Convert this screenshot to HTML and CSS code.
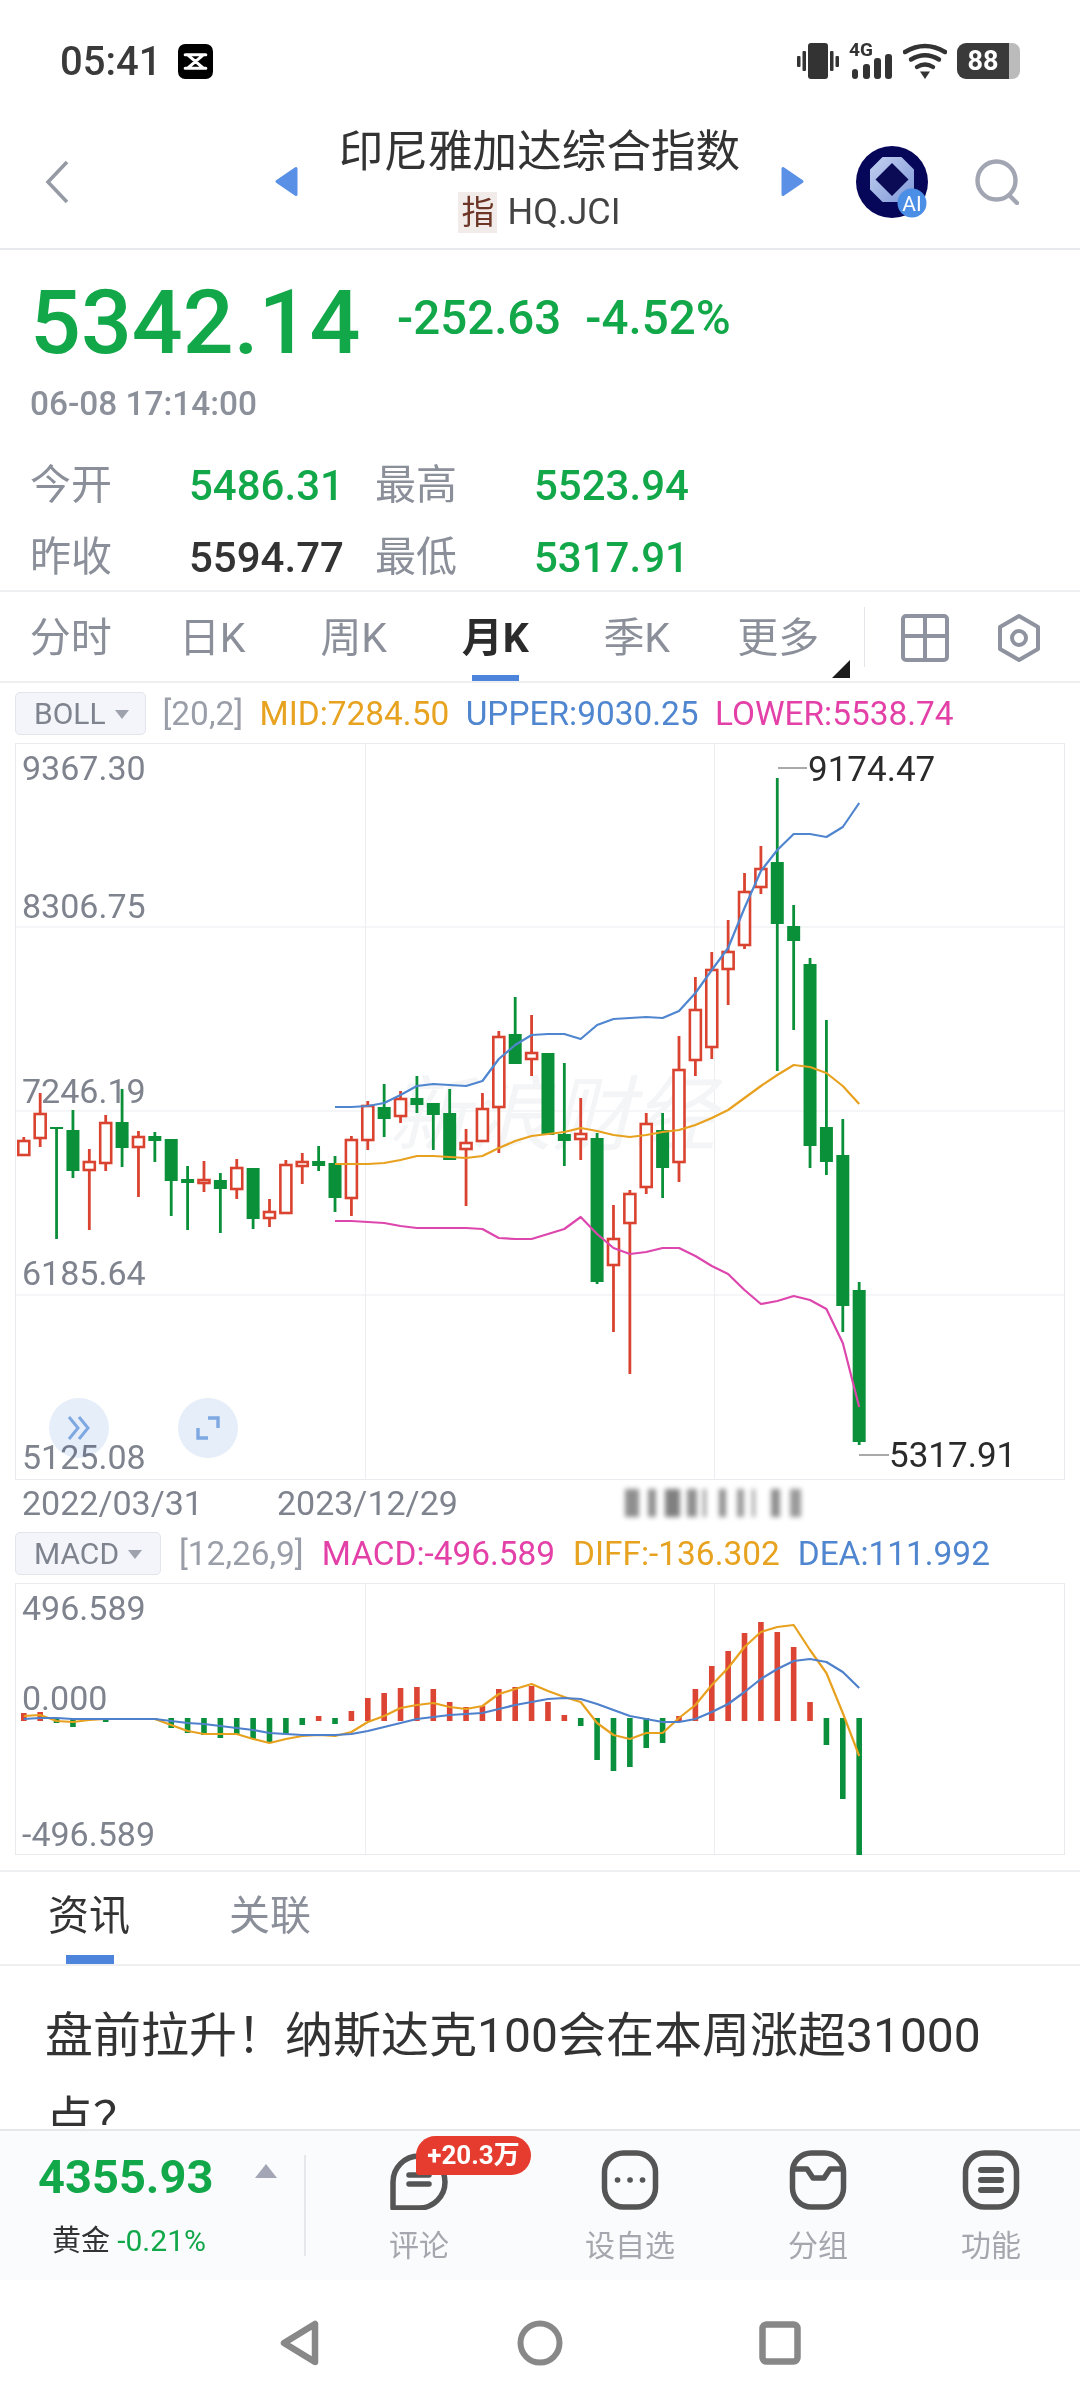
FILE: index.html
```html
<!DOCTYPE html>
<html>
<head>
    <meta charset="utf-8">
    <title>印尼雅加达综合指数</title>
    <link rel="stylesheet" href="styles.css">
</head>
<body>
    <div class="screen">
        <div class="status-bar">
            <span class="clock">05:41</span>
            <svg class="capcut" width="35" height="35" viewBox="0 0 34 34">
                <rect width="34" height="34" rx="7" fill="#000"/>
                <path d="M7 10.5H27M7 23.5H27M10 11L24 23M24 11L10 23" stroke="#fff" stroke-width="3" fill="none" stroke-linecap="round"/>
            </svg>
            <div class="status-icons">
                <svg width="42" height="36" viewBox="0 0 42 36" fill="#333">
                    <rect x="11" y="0" width="20" height="36" rx="3"/>
                    <rect x="0" y="13" width="3.5" height="11" rx="1"/>
                    <rect x="5.5" y="8" width="3.5" height="20" rx="1"/>
                    <rect x="33" y="8" width="3.5" height="20" rx="1"/>
                    <rect x="38.5" y="13" width="3.5" height="11" rx="1"/>
                </svg>
                <div class="signal">
                    <span class="signal-text">4G</span>
                    <svg class="signal-bars" width="43" height="25" viewBox="0 0 43 25" fill="#333">
                        <rect x="3" y="15" width="6" height="10" rx="3"/>
                        <rect x="14" y="10" width="7" height="15" rx="3"/>
                        <rect x="25" y="4" width="7" height="21" rx="3"/>
                        <rect x="36" y="0" width="7" height="25" rx="3"/>
                    </svg>
                </div>
                <svg class="wifi" width="44" height="36" viewBox="0 0 44 36" fill="none" stroke="#333" stroke-width="4.4" stroke-linecap="round">
                    <path d="M2 9Q22 -3 42 9"/>
                    <path d="M8 16.5Q22 8 36 16.5"/>
                    <path d="M14 24Q22 19 30 24"/>
                    <path d="M17 28.5H27L22 36Z" fill="#333" stroke="none"/>
                </svg>
                <div class="battery"><span class="battery-body">88</span><span class="battery-tip"></span></div>
            </div>
        </div>

        <div class="top-bar">
            <svg class="back" width="24" height="44" viewBox="0 0 24 44">
                <path d="M22 2L3 22L22 42" fill="none" stroke="#959aa4" stroke-width="3.6"/>
            </svg>
            <svg class="arrow-left" width="23" height="31" viewBox="0 0 23 31">
                <path d="M21 2.5V28.5L2 15.5Z" fill="#5a90e6" stroke="#5a90e6" stroke-width="3" stroke-linejoin="round"/>
            </svg>
            <div class="title-block">
                <div class="title">印尼雅加达综合指数</div>
                <div class="subtitle"><span class="type-tag">指</span>HQ.JCI</div>
            </div>
            <svg width="23" height="31" viewBox="0 0 23 31">
                <path d="M2 2.5V28.5L21 15.5Z" fill="#5a90e6" stroke="#5a90e6" stroke-width="3" stroke-linejoin="round"/>
            </svg>
            <svg class="avatar" width="72" height="72" viewBox="0 0 72 72">
                <defs>
                    <linearGradient id="ringFill" x1="0" y1="0" x2="1" y2="1">
                        <stop offset="0" stop-color="#c2cff0"/>
                        <stop offset="1" stop-color="#7f99d8"/>
                    </linearGradient>
                </defs>
                <circle cx="36" cy="36" r="36" fill="#07075a"/>
                <polygon points="27,12 45,12 57,24 57,43 45,55 27,55 15,43 15,24" fill="url(#ringFill)" stroke="url(#ringFill)" stroke-width="2" stroke-linejoin="round"/>
                <polygon points="36,17 52.5,33.5 36,50 19.5,33.5" fill="#0a0a55"/>
                <circle cx="56" cy="57" r="14.5" fill="#4a8ee6"/>
                <text x="56" y="64.5" text-anchor="middle" class="avatar-text">AI</text>
            </svg>
            <svg class="search" width="44" height="46" viewBox="0 0 44 46" fill="none" stroke="#a2a5b2" stroke-width="4.4" stroke-linecap="round">
                <circle cx="21.5" cy="21.5" r="19"/>
                <path d="M36 38L42 44"/>
            </svg>
        </div>

        <div class="quote">
            <div class="price-row">
                <span class="price">5342.14</span>
                <span class="change">-252.63</span>
                <span class="change">-4.52%</span>
            </div>
            <div class="quote-time">06-08 17:14:00</div>
            <div class="stats">
                <span class="stat-name">今开</span><span class="stat-val down">5486.31</span>
                <span class="stat-name">最高</span><span class="stat-val down">5523.94</span>
                <span class="stat-name">昨收</span><span class="stat-val">5594.77</span>
                <span class="stat-name">最低</span><span class="stat-val down">5317.91</span>
            </div>
        </div>

        <div class="period-tabs">
            <span class="period">分时</span>
            <span class="period">日K</span>
            <span class="period">周K</span>
            <span class="period active">月K</span>
            <span class="period">季K</span>
            <span class="period">更多<i class="corner"></i></span>
            <span class="tabs-sep"></span>
            <svg class="grid-icon" width="48" height="48" viewBox="0 0 48 48" fill="none" stroke="#8f939f" stroke-width="4">
                <rect x="2" y="2" width="44" height="44" rx="3"/>
                <path d="M24 2V46M2 22H46"/>
            </svg>
            <svg class="hex-icon" width="44" height="50" viewBox="0 0 44 50" fill="none" stroke="#8f939f" stroke-width="4">
                <path d="M22 3L41 14V36L22 47L3 36V14Z" stroke-linejoin="round"/>
                <circle cx="22" cy="25" r="7"/>
            </svg>
        </div>

        <div class="indicator-row">
            <span class="indicator-btn boll">BOLL<i class="caret"></i></span>
            <span class="param">[20,2]</span>
            <span class="orange">MID:7284.50</span>
            <span class="blue">UPPER:9030.25</span>
            <span class="pink">LOWER:5538.74</span>
        </div>

        <!-- viewBox keeps page coordinates so the plotted numbers are readable -->
        <svg id="kline" class="panel" width="1050" height="737" viewBox="15 743 1050 737">
            <rect class="frame" x="15.5" y="743.5" width="1049" height="736"/>
            <path class="grid" d="M15 927H1065M15 1111H1065M15 1295H1065M365.5 743V1480M714.5 743V1480"/>
            <text class="watermark" transform="translate(388 1144) skewX(-14)">新浪财经</text>
            <text class="axis" x="22" y="780">9367.30</text>
            <text class="axis" x="22" y="918">8306.75</text>
            <text class="axis" x="22" y="1103">7246.19</text>
            <text class="axis" x="22" y="1285">6185.64</text>
            <text class="axis" x="22" y="1469">5125.08</text>
            <g id="klineMarks"></g>
            <path class="leader" d="M778 768H807M859 1455H889"/>
            <text class="peak" x="808" y="781">9174.47</text>
            <text class="peak" x="889" y="1467">5317.91</text>
        </svg>

        <div class="chart-tools">
            <button class="round-btn one">
                <svg width="26" height="28" viewBox="0 0 26 28" fill="none" stroke="#7ea8e2" stroke-width="3">
                    <path d="M3 3L12 14L3 25M13 3L22 14L13 25"/>
                </svg>
            </button>
            <button class="round-btn two">
                <svg width="26" height="26" viewBox="0 0 26 26" fill="none" stroke="#7ea8e2" stroke-width="3.4">
                    <path d="M13 3H23V13M3 13V23H13"/>
                </svg>
            </button>
        </div>

        <div class="date-row">
            <span class="date">2022/03/31</span>
            <span class="date second">2023/12/29</span>
            <span class="date-blur"></span>
        </div>

        <div class="indicator-row macd-row">
            <span class="indicator-btn macd">MACD<i class="caret"></i></span>
            <span class="param">[12,26,9]</span>
            <span class="pink">MACD:-496.589</span>
            <span class="orange">DIFF:-136.302</span>
            <span class="blue">DEA:111.992</span>
        </div>

        <svg id="macd" class="panel" width="1050" height="272" viewBox="15 1583 1050 272">
            <rect class="frame" x="15.5" y="1583.5" width="1049" height="271"/>
            <path class="grid" d="M365.5 1583V1855M714.5 1583V1855"/>
            <text class="axis" x="22" y="1620">496.589</text>
            <text class="axis" x="22" y="1710">0.000</text>
            <text class="axis" x="22" y="1846">-496.589</text>
            <g id="macdMarks"></g>
        </svg>

        <div class="news-tabs">
            <span class="news-tab active">资讯</span>
            <span class="news-tab">关联</span>
        </div>

        <div class="news">盘前拉升！纳斯达克100会在本周涨超31000点？</div>

        <div class="bottom-bar">
            <div class="gold">
                <div class="gold-top"><span class="gold-price">4355.93</span><i class="gold-up"></i></div>
                <div class="gold-sub">黄金 <span class="gold-pct">-0.21%</span></div>
            </div>
            <div class="actions">
                <div class="action comment">
                    <svg width="60" height="60" viewBox="0 0 60 60" fill="none" stroke="#555" stroke-width="5.5" stroke-linejoin="round" stroke-linecap="round">
                        <path d="M4 58V32A26 26 0 1 1 30 58Z"/>
                        <path d="M20 25H40M20 34H40"/>
                    </svg>
                    <span class="count-badge">+20.3万</span>
                    <span class="action-name">评论</span>
                </div>
                <div class="action">
                    <svg width="60" height="60" viewBox="0 0 60 60" fill="none" stroke="#555" stroke-width="5.5">
                        <rect x="4.5" y="3" width="51" height="54" rx="19"/>
                        <path d="M17.5 30H17.6M30 30H30.1M42.5 30H42.6" stroke-linecap="round" stroke-width="5.6"/>
                    </svg>
                    <span class="action-name">设自选</span>
                </div>
                <div class="action">
                    <svg width="60" height="60" viewBox="0 0 60 60" fill="none" stroke="#555" stroke-width="5.5">
                        <rect x="4.5" y="3" width="51" height="54" rx="19"/>
                        <path d="M5 19H19L25 28H36L42 19H55" stroke-linejoin="round"/>
                    </svg>
                    <span class="action-name">分组</span>
                </div>
                <div class="action">
                    <svg width="60" height="60" viewBox="0 0 60 60" fill="none" stroke="#555" stroke-width="5.5">
                        <rect x="4.5" y="3" width="51" height="54" rx="19"/>
                        <path d="M20 20H40M20 30H40M20 40H40" stroke-linecap="round" stroke-width="6"/>
                    </svg>
                    <span class="action-name">功能</span>
                </div>
            </div>
        </div>

        <div class="nav-bar">
            <div class="nav-item">
                <svg width="40" height="46" viewBox="0 0 40 46" fill="none" stroke="#888" stroke-width="6.5" stroke-linejoin="round">
                    <path d="M35 4V42L4 23Z"/>
                </svg>
            </div>
            <div class="nav-item">
                <svg width="46" height="46" viewBox="0 0 46 46" fill="none" stroke="#888" stroke-width="6">
                    <circle cx="23" cy="23" r="19.5"/>
                </svg>
            </div>
            <div class="nav-item">
                <svg width="42" height="44" viewBox="0 0 42 44" fill="none" stroke="#888" stroke-width="6.5">
                    <rect x="3.5" y="3.5" width="35" height="37" rx="4"/>
                </svg>
            </div>
        </div>
    </div>
    <script src="chart.js"></script>
</body>
</html>
```

FILE: styles.css
```css
* {
    box-sizing: border-box;
}

body {
    margin: 0;
    background-color: #ffffff;
    font-family: Roboto, "Noto Sans CJK SC", sans-serif;
    color: #333333;
}

i {
    font-style: normal;
}

.screen {
    position: relative;
    width: 1080px;
    height: 2408px;
    overflow: hidden;
}

.status-bar {
    display: flex;
    align-items: center;
    height: 122px;
    padding: 0 60px;
}

.clock {
    font-size: 40px;
    font-weight: 500;
    color: #3a3a3a;
}

.capcut {
    margin-left: 17px;
}

.status-icons {
    display: flex;
    align-items: center;
    margin-left: auto;
}

.signal {
    display: flex;
    flex-direction: column;
    width: 43px;
    height: 36px;
    margin-left: 10px;
}

.signal-text {
    height: 11px;
    font-size: 19px;
    font-weight: 700;
    line-height: 13px;
    color: #333333;
}

.wifi {
    margin-left: 11px;
}

.battery {
    display: flex;
    height: 36px;
    margin-left: 10px;
}

.battery-body {
    width: 52px;
    background-color: #3a3a3a;
    border-radius: 9px 0 0 9px;
    color: #ffffff;
    font-size: 27px;
    font-weight: 700;
    line-height: 36px;
    text-align: center;
}

.battery-tip {
    width: 11px;
    background-color: #bbbbbb;
    border-radius: 0 8px 8px 0;
}

.top-bar {
    display: flex;
    align-items: center;
    height: 128px;
    padding: 0 0 7px 45px;
    border-bottom: 2px solid #e8e9ec;
}

.arrow-left {
    margin-left: 206px;
}

.title-block {
    width: 483px;
    margin-bottom: 7px;
    text-align: center;
}

.title {
    font-size: 44.6px;
    line-height: 56px;
}

.subtitle {
    display: flex;
    justify-content: center;
    align-items: center;
    gap: 10px;
    margin-top: 12px;
    font-size: 36px;
    line-height: 41px;
    color: #444444;
}

.type-tag {
    width: 39px;
    background-color: #f1ecea;
    color: #6d3526;
    font-size: 33px;
}

.avatar {
    margin-left: 52px;
}

.search {
    margin-left: 47px;
}

.quote {
    height: 342px;
    padding: 29px 0 0 30px;
    border-bottom: 2px solid #eeeff1;
}

.price-row {
    display: flex;
    align-items: center;
    height: 88px;
}

.price {
    width: 367px;
    font-size: 89.6px;
    line-height: 88px;
    font-weight: 500;
    color: #12a84a;
}

.change {
    margin-right: 24px;
    padding-bottom: 11px;
    font-size: 47.5px;
    font-weight: 500;
    color: #12a84a;
}

.quote-time {
    margin-top: 17px;
    font-size: 33.4px;
    line-height: 40px;
    font-weight: 500;
    color: #8b909a;
}

.stats {
    display: grid;
    grid-template-columns: 159px 186px 159px auto;
    grid-auto-rows: 72px;
    align-items: center;
    margin-top: 22px;
}

.stat-name {
    padding-bottom: 3px;
    font-size: 41px;
    color: #8b8f99;
}

.stat-val {
    padding-top: 7px;
    font-size: 42px;
    font-weight: 500;
}

.down {
    color: #12a84a;
}

.period-tabs {
    display: flex;
    align-items: center;
    height: 91px;
    border-bottom: 2px solid #eeeff1;
}

.period {
    position: relative;
    width: 141.5px;
    padding-top: 4px;
    font-size: 41px;
    line-height: 85px;
    text-align: center;
    color: #8b8f99;
}

.period.active {
    font-weight: 700;
    color: #2b2b2b;
}

.period.active::after {
    content: "";
    position: absolute;
    left: 47px;
    right: 47px;
    bottom: 0;
    height: 6px;
    background-color: #4d85dd;
}

.corner {
    position: absolute;
    right: -1px;
    bottom: 3px;
    width: 18px;
    height: 18px;
    background-color: #1c1c1c;
    clip-path: polygon(100% 0, 100% 100%, 0 100%);
}

.tabs-sep {
    width: 1px;
    height: 60px;
    margin-left: 15px;
    background-color: #e4e5e8;
}

.grid-icon {
    margin: 3px 0 0 36px;
}

.hex-icon {
    margin: 3px 0 0 48px;
}

.indicator-row {
    display: flex;
    align-items: center;
    gap: 16.5px;
    height: 60px;
    padding-left: 15px;
    font-size: 33.4px;
}

.indicator-btn {
    display: flex;
    align-items: center;
    height: 43px;
    padding-left: 18px;
    background-color: #f3f5fa;
    border: 1px solid #e2e5ec;
    border-radius: 5px;
    font-size: 30px;
    color: #7f838e;
}

.boll {
    width: 131px;
}

.macd {
    width: 146px;
}

.caret {
    width: 0;
    height: 0;
    margin: 2px 0 0 9px;
    border-left: 7px solid transparent;
    border-right: 7px solid transparent;
    border-top: 9px solid #9ea2ac;
}

.param {
    color: #9a9ea8;
}

.orange {
    color: #e7a21f;
}

.blue {
    color: #4f86cf;
}

.pink {
    color: #e340a8;
}

.panel {
    display: block;
    margin-left: 15px;
}

.frame {
    fill: #ffffff;
    stroke: #e9eaed;
    stroke-width: 1;
}

.grid {
    fill: none;
    stroke: #ecedf0;
    stroke-width: 1;
}

.axis {
    font-size: 34px;
    fill: #7f838e;
}

.peak {
    font-size: 35px;
    fill: #2a2a2a;
}

.leader {
    fill: none;
    stroke: #555555;
    stroke-width: 1;
}

.watermark {
    font-size: 82px;
    fill: #f4f5f6;
}

.chart-tools .round-btn {
    position: absolute;
    top: 1398px;
    display: flex;
    align-items: center;
    justify-content: center;
    width: 60px;
    height: 60px;
    padding: 0;
    border: none;
    border-radius: 50%;
    background-color: #e6eefa;
    mix-blend-mode: multiply;
}

.round-btn.one {
    left: 49px;
}

.round-btn.two {
    left: 178px;
}

.date-row {
    display: flex;
    align-items: center;
    height: 46px;
    padding-left: 22px;
    font-size: 34px;
    color: #7f838e;
}

.date.second {
    margin-left: 74px;
}

.date-blur {
    width: 177px;
    height: 28px;
    margin-left: 167px;
    filter: blur(2.4px);
    background: linear-gradient(90deg,
        #8f8f8f 0 14px, transparent 14px 23px,
        #8f8f8f 23px 31px, transparent 31px 40px,
        #808080 40px 55px, transparent 55px 62px,
        #8f8f8f 62px 72px, transparent 72px 78px,
        #8f8f8f 78px 81px, transparent 81px 94px,
        #8f8f8f 94px 101px, transparent 101px 112px,
        #9a9a9a 112px 119px, transparent 119px 127px,
        #9a9a9a 127px 130px, transparent 130px 146px,
        #8f8f8f 146px 155px, transparent 155px 165px,
        #9a9a9a 165px 176px, transparent 176px);
}

.macd-row {
    gap: 18px;
    height: 57px;
    padding-bottom: 2px;
}

.news-tabs {
    display: flex;
    gap: 99px;
    height: 96px;
    margin-top: 15px;
    padding-left: 48px;
    border-top: 2px solid #eeeff1;
    border-bottom: 2px solid #eeeff1;
}

.news-tab {
    position: relative;
    font-size: 41px;
    line-height: 89px;
    color: #8b8f99;
}

.news-tab.active {
    height: 92px;
    color: #333333;
}

.news-tab.active::after {
    content: "";
    position: absolute;
    left: 18px;
    width: 48px;
    bottom: 0;
    height: 9px;
    background-color: #4d85dd;
}

.news {
    height: 163px;
    padding: 28px 90px 0 45px;
    overflow: hidden;
    font-size: 48px;
    line-height: 84px;
    color: #333333;
}

.bottom-bar {
    display: flex;
    height: 151px;
    background-color: #fafbfd;
    border-top: 2px solid #e6e7ea;
}

.gold {
    width: 306px;
    height: 101px;
    margin-top: 24px;
    padding-left: 38px;
    border-right: 2px solid #e6e7ea;
}

.gold-top {
    display: flex;
    align-items: flex-start;
    height: 68px;
}

.gold-price {
    font-size: 47px;
    line-height: 44px;
    font-weight: 700;
    color: #12a84a;
}

.gold-up {
    width: 0;
    height: 0;
    margin: 9px 0 0 42px;
    border-left: 11px solid transparent;
    border-right: 11px solid transparent;
    border-bottom: 14px solid #a3a6b5;
}

.gold-sub {
    padding-left: 14px;
    font-size: 29px;
    line-height: 36px;
    color: #333333;
}

.gold-pct {
    font-size: 30px;
    color: #12a84a;
}

.actions {
    display: flex;
    gap: 113px;
    padding: 19px 0 0 83px;
}

.action {
    position: relative;
    display: flex;
    flex-direction: column;
    align-items: center;
}

.action.comment {
    margin-right: 23px;
}

.action-name {
    margin-top: 18px;
    font-size: 30px;
    line-height: 36px;
    color: #a4a7ad;
}

.count-badge {
    position: absolute;
    left: 27px;
    top: -14px;
    width: 115px;
    height: 39px;
    background-color: #e63c2f;
    border-radius: 20px 20px 20px 3px;
    color: #ffffff;
    font-size: 26px;
    font-weight: 700;
    line-height: 39px;
    text-align: center;
}

.nav-bar {
    display: flex;
    justify-content: center;
    height: 126px;
}

.nav-item {
    display: flex;
    align-items: center;
    justify-content: center;
    width: 240px;
}

.avatar-text {
    font-size: 21px;
    fill: #ffffff;
}
```

FILE: chart.js
```js
// page coordinates, read off the chart: [wick top, body top, body bottom, wick bottom, up?]
var candles = [
    [1137,1141,1155,1155,1],[1093,1114,1138,1147,1],[1127,1127,1129,1239,0],[1110,1130,1171,1178,0],
    [1149,1162,1170,1230,1],[1115,1123,1163,1171,1],[1089,1122,1148,1167,0],[1131,1137,1147,1197,1],
    [1132,1136,1141,1162,0],[1139,1139,1181,1216,0],[1166,1179,1183,1230,0],[1161,1180,1183,1192,1],
    [1173,1180,1189,1233,0],[1159,1168,1189,1199,1],[1168,1168,1219,1229,0],[1199,1212,1218,1227,1],
    [1160,1165,1213,1213,1],[1153,1162,1166,1184,1],[1146,1161,1166,1171,0],[1156,1163,1198,1212,0],
    [1136,1140,1198,1216,1],[1101,1106,1140,1150,1],[1084,1107,1119,1137,0],[1091,1099,1116,1123,1],
    [1076,1098,1105,1113,0],[1103,1103,1115,1150,0],[1089,1113,1160,1160,0],[1129,1143,1149,1206,1],
    [1093,1109,1141,1141,1],[1031,1037,1107,1153,1],[997,1034,1064,1064,0],[1015,1053,1059,1076,1],
    [1053,1053,1135,1135,0],[1063,1134,1141,1166,0],[1098,1134,1139,1160,1],[1133,1138,1282,1284,0],
    [1205,1239,1265,1332,1],[1190,1194,1223,1374,1],[1113,1124,1187,1194,1],[1113,1130,1168,1198,0],
    [1036,1070,1162,1182,1],[977,1010,1060,1076,1],[952,970,1047,1059,1],[920,952,969,1005,1],
    [873,892,945,949,1],[846,869,887,894,1],[778,862,924,1071,0],[905,926,941,1030,0],
    [958,964,1146,1168,0],[1020,1127,1162,1175,0],[1119,1155,1306,1332,0],[1282,1290,1442,1445,0]
];

// boll lines start at candle 19
var upper = [1107,1107,1106,1103,1095,1086,1084,1085,1086,1081,1059,1045,1035,1034,1034,1039,1025,1019,1018,1017,1018,1011,993,970,948,908,871,850,834,834,837,827,803];
var mid = [1164,1164,1164,1163,1160,1156,1156,1157,1158,1156,1148,1141,1136,1134,1132,1128,1131,1135,1137,1135,1132,1130,1125,1118,1110,1098,1086,1075,1065,1067,1073,1086,1104];
var lower = [1221,1221,1222,1223,1226,1228,1228,1228,1228,1229,1238,1239,1239,1234,1229,1217,1234,1248,1254,1252,1248,1248,1256,1266,1274,1290,1304,1301,1296,1300,1309,1343,1407];

// end of each macd bar, above 1718 is red, below is green
var bars = [1713,1712,1723,1727,1719,1722,1719,1719,1719,1728,1733,1735,1738,1734,1739,1743,1734,1725,1716,1724,1711,1698,1693,1688,1687,1689,1702,1707,1706,1689,1687,1686,1702,1715,1726,1760,1771,1767,1748,1743,1716,1689,1666,1651,1633,1622,1632,1647,1702,1745,1799,1855];
var diff = [1716,1715,1721,1722,1720,1719,1719,1719,1719,1725,1731,1734,1734,1734,1739,1743,1739,1736,1735,1736,1732,1722,1716,1708,1705,1703,1707,1709,1706,1694,1689,1684,1691,1697,1702,1723,1735,1739,1733,1733,1718,1705,1685,1668,1647,1632,1627,1625,1650,1673,1713,1756];
var dea = [1719,1718,1718,1719,1719,1719,1719,1719,1719,1721,1723,1724,1726,1728,1730,1733,1734,1735,1735,1735,1734,1731,1727,1723,1719,1717,1715,1714,1713,1709,1705,1702,1699,1698,1699,1704,1710,1716,1719,1722,1722,1719,1712,1704,1692,1679,1669,1661,1659,1662,1672,1688];

var RED = "#d9432f";
var GREEN = "#0a9038";

function xAt(i) {
    return 23.8 + 16.38 * i;
}

function add(parent, tag, attrs) {
    var el = document.createElementNS("http://www.w3.org/2000/svg", tag);
    for (var key in attrs) {
        el.setAttribute(key, attrs[key]);
    }
    parent.appendChild(el);
    return el;
}

function drawLine(parent, values, start, color) {
    var points = values.map(function (y, i) {
        return xAt(i + start).toFixed(1) + "," + y;
    });
    add(parent, "polyline", {
        points: points.join(" "),
        fill: "none",
        stroke: color,
        "stroke-width": 2.2,
        "stroke-linejoin": "round"
    });
}

var klineMarks = document.getElementById("klineMarks");
candles.forEach(function (c, i) {
    var x = xAt(i);
    var color = c[4] ? RED : GREEN;
    add(klineMarks, "line", { x1: x, x2: x, y1: c[0], y2: c[3], stroke: color, "stroke-width": 2.8 });
    if (c[4]) {
        add(klineMarks, "rect", {
            x: x - 5.5, y: c[1], width: 11, height: c[2] - c[1],
            fill: "#ffffff", stroke: color, "stroke-width": 2.6
        });
    } else {
        add(klineMarks, "rect", { x: x - 6.5, y: c[1], width: 13, height: c[2] - c[1], fill: color });
    }
});
drawLine(klineMarks, upper, 19, "#4f86cf");
drawLine(klineMarks, mid, 19, "#e8a11e");
drawLine(klineMarks, lower, 19, "#dd46ad");

var macdMarks = document.getElementById("macdMarks");
bars.forEach(function (end, i) {
    var up = end < 1718;
    add(macdMarks, "rect", {
        x: xAt(i) - 2.8,
        y: up ? end : 1718,
        width: 5.6,
        height: up ? 1721 - end : end - 1718,
        fill: up ? "#dc4433" : "#0a8f3d"
    });
});
drawLine(macdMarks, diff, 0, "#e8a11e");
drawLine(macdMarks, dea, 0, "#4f80cc");
```
